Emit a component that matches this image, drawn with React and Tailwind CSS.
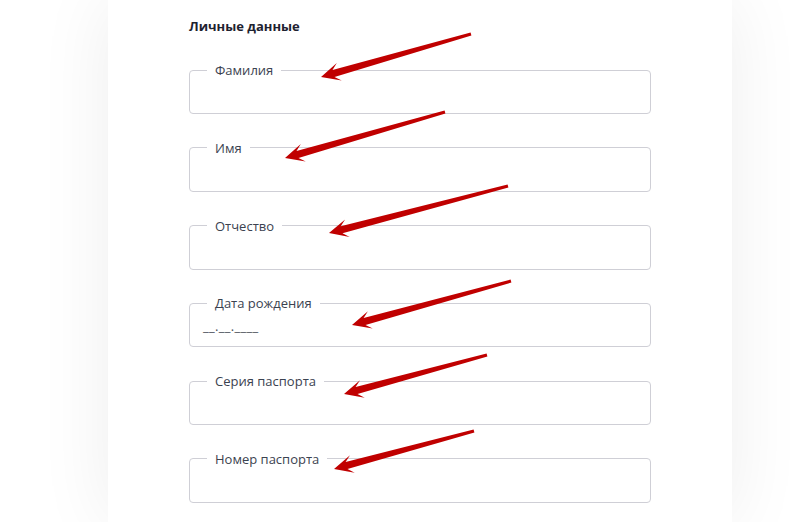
import React from "react";

const fields = [
  { label: "Фамилия" },
  { label: "Имя" },
  { label: "Отчество" },
  { label: "Дата рождения", placeholder: "__.__.____" },
  { label: "Серия паспорта" },
  { label: "Номер паспорта" },
];

// стрелки: хвост -> острие
const arrows = [
  [471, 34, 321, 77],
  [445, 112, 285, 158],
  [508, 186, 329, 233],
  [511, 281, 352, 325],
  [487, 355, 344, 394],
  [474, 431, 334, 469],
];

function arrowPoints([x1, y1, x2, y2]) {
  const dx = x2 - x1;
  const dy = y2 - y1;
  const len = Math.hypot(dx, dy);
  const ux = dx / len;
  const uy = dy / len;
  const nx = -uy;
  const ny = ux;
  const headLen = 19;
  const headW = 9;
  const bx = x2 - ux * headLen;
  const by = y2 - uy * headLen;
  const nb = x2 - ux * (headLen - 6);
  const nbY = y2 - uy * (headLen - 6);
  const pts = [
    [x1 + nx * 1.6, y1 + ny * 1.6],
    [nb + nx * 3.6, nbY + ny * 3.6],
    [bx + nx * headW, by + ny * headW],
    [x2, y2],
    [bx - nx * headW, by - ny * headW],
    [nb - nx * 3.6, nbY - ny * 3.6],
    [x1 - nx * 1.6, y1 - ny * 1.6],
  ];
  return pts.map((p) => p[0].toFixed(1) + "," + p[1].toFixed(1)).join(" ");
}

function Field({ label, placeholder }) {
  return (
    <fieldset className="h-[53px] w-[462px] rounded-[4px] border border-[#cfcfd6]">
      <legend className="ml-[17px] px-2 text-[13px] leading-[18px] text-[#3b4250]">
        {label}
      </legend>
      <div className="px-[13px] pt-[5px] text-[13px] leading-[18px] tracking-[0.3px] text-[#4a4f5a]">
        {placeholder}
      </div>
    </fieldset>
  );
}

export default function App() {
  return (
    <div
      className="relative h-[522px] w-[800px] overflow-hidden bg-white"
      style={{ fontFamily: '"Open Sans", "Noto Sans", sans-serif' }}
    >
      <div className="flex h-full pl-[108px]">
        <div className="h-full w-[624px] bg-white pl-[81px] pt-[17px] shadow-[0_0_70px_rgba(0,0,0,0.07)]">
          <h2 className="text-[13px] font-bold leading-[18px] text-[#1e2230]">
            Личные данные
          </h2>
          <div className="mt-[26px] flex flex-col gap-[24.8px]">
            {fields.map((f) => (
              <Field key={f.label} {...f} />
            ))}
          </div>
        </div>
      </div>

      <svg
        className="pointer-events-none absolute left-0 top-0"
        width="800"
        height="522"
        viewBox="0 0 800 522"
      >
        {arrows.map((a, i) => (
          <polygon key={i} points={arrowPoints(a)} fill="#c00000" />
        ))}
      </svg>
    </div>
  );
}
